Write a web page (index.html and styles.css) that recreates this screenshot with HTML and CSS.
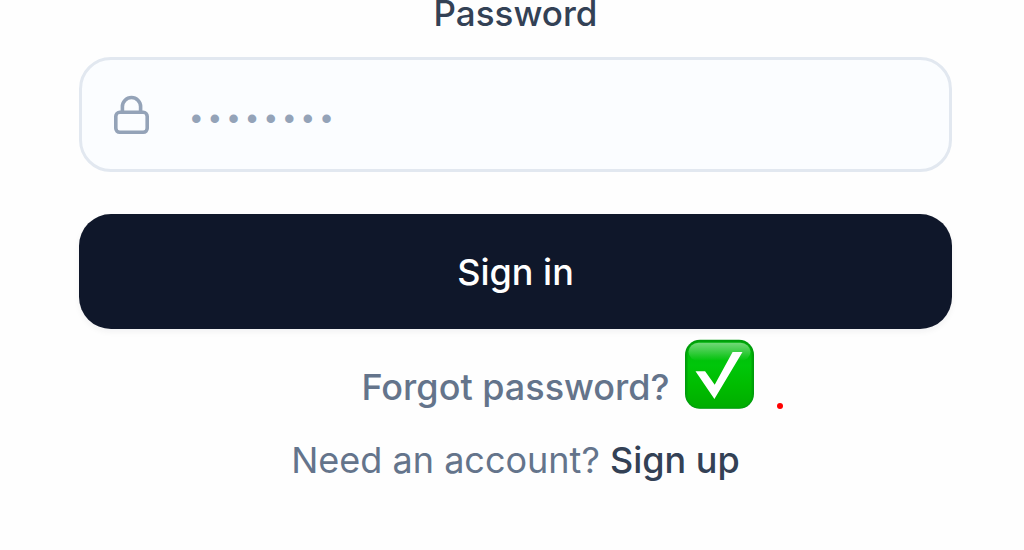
FILE: index.html
```html
<!DOCTYPE html>
<html lang="en">
<head>
<meta charset="utf-8">
<meta name="viewport" content="width=device-width, initial-scale=1">
<title>Sign in</title>
<link rel="stylesheet" href="styles.css">
</head>
<body>
<form class="login">
  <label class="label" for="password">Password</label>
  <div class="field">
    <svg class="lock" viewBox="0 0 36 40" fill="none" stroke="currentColor" stroke-width="3.6" aria-hidden="true">
      <rect x="1.8" y="17.3" width="31.4" height="20" rx="4"/>
      <path d="M8.4 17V11.6a9.1 9.1 0 0 1 18.2 0V17"/>
    </svg>
    <input class="input" id="password" type="password" placeholder="••••••••">
  </div>
  <button class="submit" type="submit">Sign in</button>
  <div class="forgot">
    <a class="forgot-link" href="#">Forgot password?</a>
    <span class="marks">
      <svg class="check" viewBox="0 0 70 70" role="img" aria-label="Done">
        <defs>
          <linearGradient id="face" x1="0" y1="0" x2="0" y2="1">
            <stop offset="0" stop-color="#00b80b"/>
            <stop offset=".35" stop-color="#00c60a"/>
            <stop offset=".65" stop-color="#00bd00"/>
            <stop offset="1" stop-color="#00ad00"/>
          </linearGradient>
          <linearGradient id="gloss" x1="0" y1="0" x2="0" y2="1">
            <stop offset="0" stop-color="#fff" stop-opacity=".45"/>
            <stop offset="1" stop-color="#fff" stop-opacity="0"/>
          </linearGradient>
        </defs>
        <rect x="0" y=".8" width="69" height="69" rx="15" fill="#009c0c"/>
        <rect x="1" y="2.3" width="67" height="67" rx="14" fill="#00a508"/>
        <rect x="2.5" y="3.3" width="64" height="65" rx="12" fill="url(#face)"/>
        <rect x="3.5" y="3.8" width="62" height="18" rx="10" fill="url(#gloss)"/>
        <path d="M10.5 32.2h9.6l9.6 13.6L47.6 13h9.9L29.4 60z" fill="#fff"/>
      </svg>
      <span class="dot"></span>
    </span>
  </div>
  <p class="signup">Need an account? <a class="signup-link" href="#">Sign up</a></p>
</form>
</body>
</html>
```
FILE: styles.css
```css
* { box-sizing: border-box; }

body {
  margin: 0;
  background: #fefefe;
  color: #64748b;
  font-family: Inter, "Liberation Sans", sans-serif;
  font-size: 36px;
}

.login {
  display: flex;
  flex-direction: column;
  padding: 0 72px 40px 79px;
}

.label {
  margin-bottom: 31px;
  color: #334155;
  font-size: 35px;
  font-weight: 500;
  line-height: 26px;
  text-align: center;
}

.field {
  display: flex;
  align-items: center;
  gap: 37px;
  height: 115px;
  padding: 0 32px;
  border: 3px solid #e2e8f0;
  border-radius: 32px;
  background: #fbfdff;
}

.lock {
  flex: none;
  width: 36px;
  height: 40px;
  color: #94a3b8;
}

.input {
  flex: 1;
  min-width: 0;
  padding: 11px 0 0;
  border: 0;
  outline: 0;
  background: transparent;
  color: #334155;
  font-family: "Liberation Mono", monospace;
  font-size: 31px;
}

.input::placeholder {
  color: #94a3b8;
  opacity: 1;
}

.submit {
  height: 115px;
  margin-top: 42px;
  padding: 0;
  border: 0;
  border-radius: 32px;
  background: #0f172a;
  box-shadow: 0 3px 6px rgba(15, 23, 42, 0.05);
  color: #fff;
  font: inherit;
  font-weight: 500;
}

.forgot {
  position: relative;
  margin-top: 36px;
  line-height: 44px;
  text-align: center;
}

.forgot-link {
  color: #64748b;
  font-weight: 500;
  text-decoration: none;
}

.marks {
  position: absolute;
  left: calc(50% + 169px);
  bottom: 0;
  display: flex;
  align-items: flex-end;
  gap: 22px;
}

.check {
  width: 70px;
  height: 70px;
}

.dot {
  width: 6px;
  height: 6px;
  border-radius: 50%;
  background: #f00;
}

.signup {
  margin: 29px 0 0;
  line-height: 44px;
  text-align: center;
}

.signup-link {
  color: #334155;
  font-weight: 500;
  text-decoration: none;
}
```
